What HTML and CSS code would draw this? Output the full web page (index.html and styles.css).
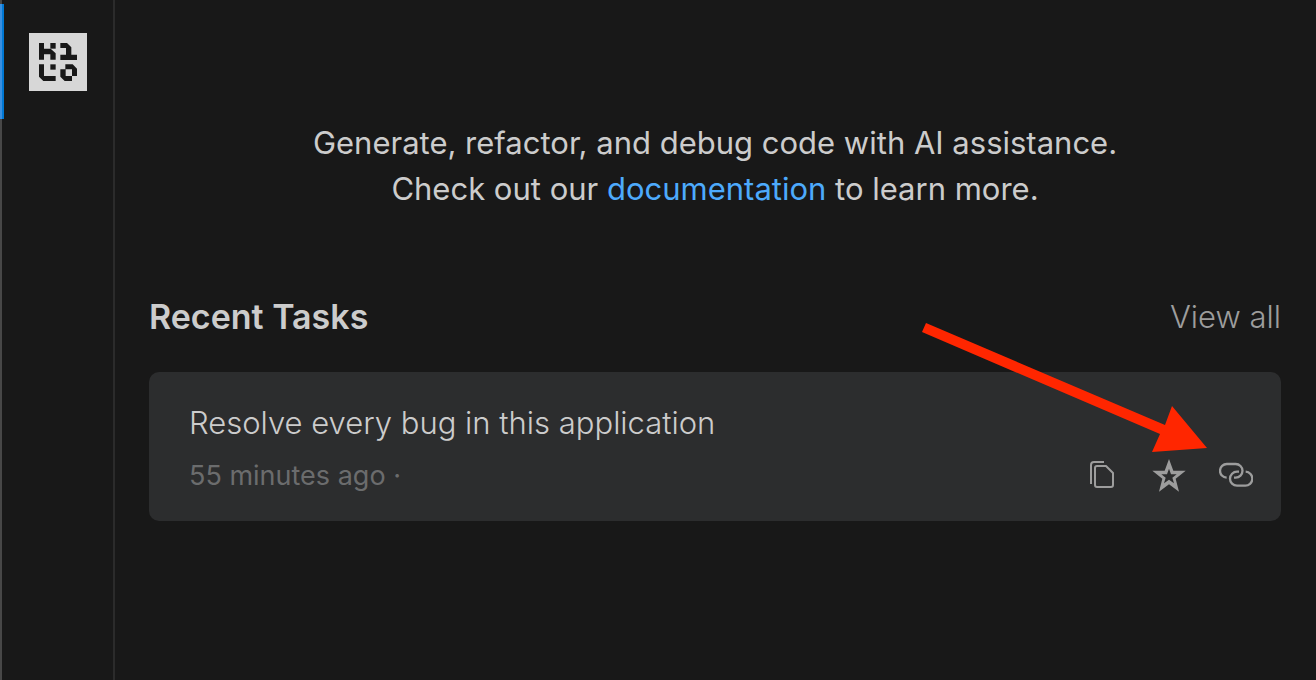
FILE: index.html
```html
<!doctype html>
<html lang="en">
<head>
<meta charset="utf-8">
<title>Kilo Code</title>
<meta name="viewport" content="width=device-width, initial-scale=1">
<link rel="stylesheet" href="styles.css">
</head>
<body>

<nav class="activity-bar">
  <button class="activity active" type="button" aria-label="Kilo Code">
    <svg class="logo" viewBox="0 0 174 174" aria-hidden="true">
      <rect width="174" height="174" fill="#d7d7d7"/>
      <g fill="#181818">
        <path d="M30 30h15v17h20l15 14v19H64V64H45v16H30z"/>
        <path d="M64 30h16v17H64z"/>
        <path d="M94 30h20l13 13v22h17v16H94V65h17V45H94z"/>
        <path d="M30 94h15v35h35v15H43L30 131z"/>
        <path d="M64 94h16v16H64z"/>
        <path fill-rule="evenodd" d="M109 94h22l13 13v22h-15v15h-22l-13-13v-22h15zM110 109v20h19v-20z"/>
      </g>
    </svg>
  </button>
</nav>

<main>
  <p class="intro">
    Generate, refactor, and debug code with AI assistance.<br>
    Check out our <a href="#docs">documentation</a> to learn more.
  </p>

  <section class="recent">
    <header>
      <h2>Recent Tasks</h2>
      <button class="view-all" type="button">View all</button>
    </header>

    <article class="task">
      <h3>Resolve every bug in this application</h3>
      <div class="task-footer">
        <span>55 minutes ago ·</span>
        <div class="actions">
          <button type="button" aria-label="Copy prompt">
            <svg viewBox="0 0 34 34" fill="none" stroke="#9d9d9d" stroke-width="2" stroke-linejoin="round">
              <path d="M10 9q0-2 2-2h9l7 7v12q0 2-2 2H12q-2 0-2-2z"/>
              <path d="M6 25V6q0-3 3-3h10"/>
            </svg>
          </button>
          <button type="button" aria-label="Add to favorites">
            <svg viewBox="0 0 102 102" fill="#9d9d9d" fill-rule="evenodd">
              <path d="M51 0l13 35h37L71 59l10 39-30-22-30 22 10-39L1 35h37zM51 29l-6 17H28l13 10-5 17 15-11 15 11-5-17 13-10H57z"/>
            </svg>
          </button>
          <button type="button" aria-label="Copy link">
            <svg viewBox="0 0 102 102" fill="none" stroke="#9d9d9d" stroke-width="7">
              <path d="M23 56A20 20 0 0 1 24 15h26a20 20 0 0 1 0 41h-5"/>
              <path d="M60 38h-6a21 21 0 0 0 0 42h24a21 21 0 0 0 2-42"/>
            </svg>
          </button>
        </div>
      </div>
      <svg class="arrow" viewBox="0 0 286 130" aria-hidden="true">
        <path d="M5 0l239 102 7-19 35 42-55 4 8-18L1 9z" fill="#ff2600"/>
      </svg>
    </article>
  </section>
</main>

</body>
</html>
```

FILE: styles.css
```css
:root{--bg:#181818;--border:#2b2b2b;--text:#cccccc;--muted:#9d9d9d;--link:#4daafc;--card:#2c2d2e;}
*{box-sizing:border-box;}
body{display:flex;min-height:100vh;margin:0;background:var(--bg);color:var(--text);font-family:Inter,"Liberation Sans",sans-serif;font-size:31px;line-height:46px;}
button{margin:0;padding:0;border:0;background:none;color:inherit;font:inherit;cursor:pointer;}
h2,h3,p{margin:0;}

/* activity bar */
.activity-bar{flex:none;width:115px;padding-top:4px;border-left:2px solid #474747;border-right:2px solid var(--border);}
.activity{position:relative;display:grid;place-items:center;width:100%;height:115px;}
.activity.active::before{content:"";position:absolute;top:0;bottom:0;left:-2px;width:4px;background:linear-gradient(90deg,#3a8fe0 50%,#0078d4 50%);}
.logo{width:58px;height:58px;}

main{flex:1;padding:120px 35px 40px 34px;}
.intro{text-align:center;}
.intro a{color:var(--link);text-decoration:none;}

/* recent tasks */
.recent{margin-top:82px;}
.recent header{display:flex;align-items:center;justify-content:space-between;margin-bottom:32px;}
.recent h2{font-size:34px;font-weight:600;}
.view-all{color:var(--muted);font-weight:300;}

.task{position:relative;padding:28px 28px 22px 40px;border-radius:10px;background:var(--card);}
.task h3{font-size:31px;font-weight:300;}
.task-footer{display:flex;align-items:center;justify-content:space-between;margin-top:7px;color:#6b6c6d;font-size:27px;}
.actions{display:flex;gap:33px;}
.actions button{display:flex;}
.actions svg{width:34px;height:34px;}

/* pointer laid over the card */
.arrow{position:absolute;top:-49px;right:74px;width:286px;height:130px;pointer-events:none;}
```
